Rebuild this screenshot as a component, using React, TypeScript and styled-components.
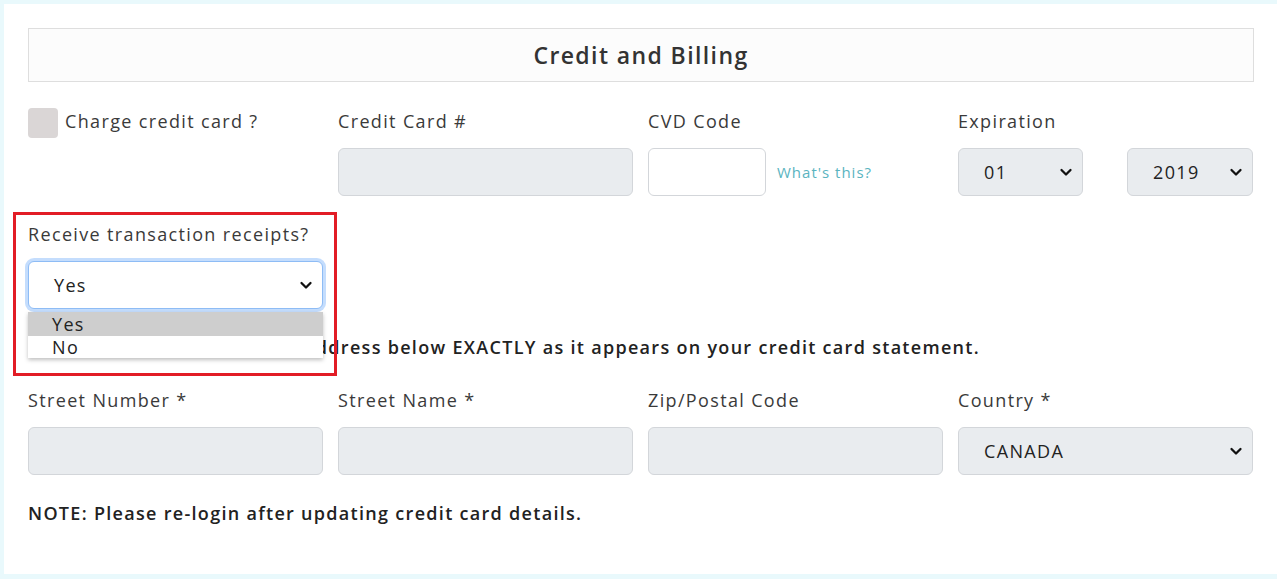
import React from "react";
import styled, { createGlobalStyle } from "styled-components";

const Global = createGlobalStyle`
  html, body { margin: 0; padding: 0; background: #e9f9fc; }
  body { font-family: "Open Sans", "Liberation Sans", sans-serif; color: #333; letter-spacing: 1.35px; }
  * { box-sizing: border-box; }
`;

const Page = styled.div`
  padding: 4px 0 5px 4px;
  background: #e9f9fc;
  width: 1277px;
  height: 579px;
`;

const Card = styled.div`
  background: #fff;
  height: 570px;
  padding: 24px 23px 0 24px;
`;

const Header = styled.div`
  height: 54px;
  border: 1px solid #dedede;
  background: #fcfcfc;
  display: flex;
  align-items: center;
  justify-content: center;
  font-size: 23px;
  font-weight: 600;
  letter-spacing: 1.4px;
  color: #333;
`;

const Grid = styled.div<{ $mt: number }>`
  display: grid;
  grid-template-columns: repeat(4, 295px);
  column-gap: 15px;
  margin-top: ${(p) => p.$mt}px;
`;

const Field = styled.div`
  display: flex;
  flex-direction: column;
`;

const Label = styled.div`
  font-size: 18px;
  line-height: 24px;
  color: #3a3a3a;
  margin-bottom: 15px;
  white-space: nowrap;
`;

const CheckRow = styled.label`
  display: flex;
  align-items: flex-start;
  gap: 7px;
  font-size: 18px;
  line-height: 24px;
  color: #3a3a3a;
`;

const CheckBox = styled.span`
  width: 30px;
  height: 30px;
  margin-top: -1px;
  border-radius: 4px;
  background: #dad6d6;
  flex: none;
`;

const Input = styled.div<{ $white?: boolean; $w?: number }>`
  height: 48px;
  width: ${(p) => (p.$w ? `${p.$w}px` : "100%")};
  border: 1px solid #d3d6da;
  border-radius: 6px;
  background: ${(p) => (p.$white ? "#fff" : "#e9ecef")};
  flex: none;
`;

const InlineRow = styled.div<{ $between?: boolean }>`
  display: flex;
  align-items: center;
  gap: 11px;
  justify-content: ${(p) => (p.$between ? "space-between" : "flex-start")};
`;

const Help = styled.span`
  color: #5ab4bf;
  font-size: 15px;
  letter-spacing: 1px;
`;

const Select = styled.div<{ $w?: number; $focus?: boolean; $white?: boolean }>`
  height: 48px;
  width: ${(p) => (p.$w ? `${p.$w}px` : "100%")};
  border: 1px solid ${(p) => (p.$focus ? "#8ebcf5" : "#d3d6da")};
  border-radius: 6px;
  background: ${(p) => (p.$white ? "#fff" : "#e9ecef")};
  box-shadow: ${(p) => (p.$focus ? "0 0 0 3px rgba(125, 180, 250, 0.45)" : "none")};
  display: flex;
  align-items: center;
  justify-content: space-between;
  padding: 0 9px 0 25px;
  font-size: 18px;
  color: #222;
`;

const Chevron = () => (
  <svg width="14" height="10" viewBox="0 0 14 10">
    <polyline points="2.5,3 7,7.5 11.5,3" fill="none" stroke="#111" strokeWidth="2.3" strokeLinecap="round" strokeLinejoin="round" />
  </svg>
);

const ReceiptBlock = styled.div`
  position: relative;
  width: 295px;
  margin-top: 26px;
`;

const Highlight = styled.div`
  position: absolute;
  left: -15px;
  top: -10px;
  width: 324px;
  height: 164px;
  border: 3px solid #e21d26;
  pointer-events: none;
  z-index: 3;
`;

const Menu = styled.div`
  position: absolute;
  left: 0;
  top: 90px;
  width: 295px;
  background: #fff;
  box-shadow: 0 2px 4px rgba(0, 0, 0, 0.25);
  z-index: 2;
`;

const Option = styled.div<{ $active?: boolean }>`
  height: ${(p) => (p.$active ? 24 : 22)}px;
  line-height: ${(p) => (p.$active ? 24 : 22)}px;
  padding-left: 24px;
  font-size: 18px;
  color: #222;
  background: ${(p) => (p.$active ? "#cecece" : "#fff")};
`;

const Bold = styled.div<{ $mt: number; $w?: number }>`
  font-size: 18px;
  line-height: 24px;
  font-weight: 600;
  letter-spacing: 1.3px;
  color: #222;
  margin-top: ${(p) => p.$mt}px;
  white-space: nowrap;
  width: ${(p) => (p.$w ? `${p.$w}px` : "auto")};
  text-align: ${(p) => (p.$w ? "right" : "left")};
`;

export default function App() {
  return (
    <>
      <Global />
      <Page>
        <Card>
          <Header>Credit and Billing</Header>
          <Grid $mt={27}>
            <Field>
              <CheckRow>
                <CheckBox />
                Charge credit card ?
              </CheckRow>
            </Field>
            <Field>
              <Label>Credit Card #</Label>
              <Input />
            </Field>
            <Field>
              <Label>CVD Code</Label>
              <InlineRow>
                <Input $white $w={118} />
                <Help>What's this?</Help>
              </InlineRow>
            </Field>
            <Field>
              <Label>Expiration</Label>
              <InlineRow $between>
                <Select $w={125}>
                  01
                  <Chevron />
                </Select>
                <Select $w={126}>
                  2019
                  <Chevron />
                </Select>
              </InlineRow>
            </Field>
          </Grid>
          <ReceiptBlock>
            <Label>Receive transaction receipts?</Label>
            <Select $white $focus>
              Yes
              <Chevron />
            </Select>
            <Menu>
              <Option $active>Yes</Option>
              <Option>No</Option>
            </Menu>
            <Highlight />
          </ReceiptBlock>
          <Bold $mt={26} $w={952}>
            Please enter your billing address below EXACTLY as it appears on your credit card statement.
          </Bold>
          <Grid $mt={29}>
            <Field>
              <Label>Street Number *</Label>
              <Input />
            </Field>
            <Field>
              <Label>Street Name *</Label>
              <Input />
            </Field>
            <Field>
              <Label>Zip/Postal Code</Label>
              <Input />
            </Field>
            <Field>
              <Label>Country *</Label>
              <Select>
                CANADA
                <Chevron />
              </Select>
            </Field>
          </Grid>
          <Bold $mt={26}>NOTE: Please re-login after updating credit card details.</Bold>
        </Card>
      </Page>
    </>
  );
}
